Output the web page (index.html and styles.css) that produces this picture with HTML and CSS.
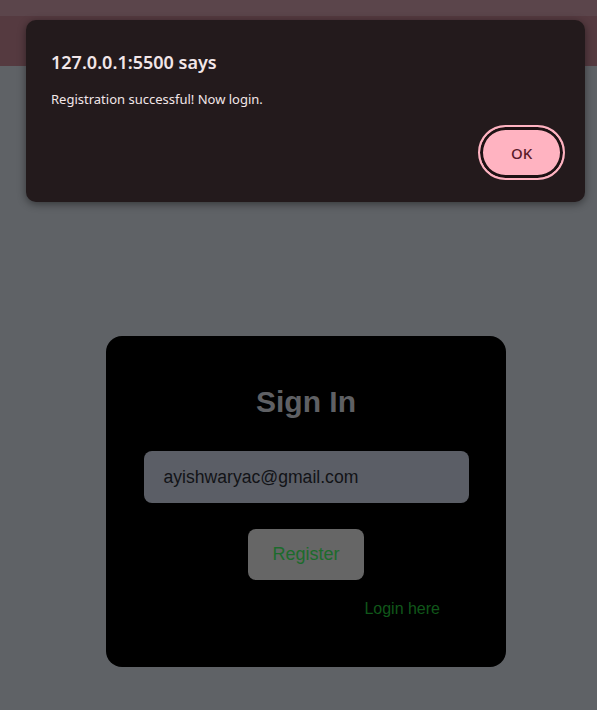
FILE: index.html
```html
<!DOCTYPE html>
<html>
<head>
<meta charset="utf-8">
<link rel="stylesheet" href="styles.css">
</head>
<body>
<div class="topstrip"></div>
<div class="band"></div>
<main class="stage">
  <div class="card">
    <h2 class="title">Sign In</h2>
    <div class="field">ayishwaryac@gmail.com</div>
    <button class="register">Register</button>
    <a class="login">Login here</a>
  </div>
</main>
<div class="dialog">
  <div class="dlg-title">127.0.0.1:5500 says</div>
  <div class="dlg-msg">Registration successful! Now login.</div>
  <div class="dlg-actions"><button class="ok">OK</button></div>
</div>
</body>
</html>
```
FILE: styles.css
```css
html, body { margin: 0; padding: 0; }
body {
  background: #5f6266;
  width: 597px;
  height: 710px;
  overflow: hidden;
  font-family: "Liberation Sans", Arial, sans-serif;
  position: relative;
}
.topstrip { height: 16px; background: #5b454b; }
.band { height: 50px; background: #553a40; }
.stage {
  display: flex;
  justify-content: center;
  padding-left: 15px;
  padding-top: 270px;
}
.card {
  width: 400px;
  height: 331px;
  box-sizing: border-box;
  background: #000;
  border-radius: 16px;
  display: flex;
  flex-direction: column;
  align-items: center;
  padding-top: 48px;
}
.title {
  margin: 0;
  font-size: 30px;
  font-weight: bold;
  color: #5f6064;
  line-height: 36px;
}
.field {
  margin-top: 31px;
  width: 325px;
  height: 52px;
  box-sizing: border-box;
  background: #5b5e66;
  border-radius: 8px;
  padding-left: 20px;
  display: flex;
  align-items: center;
  font-size: 17.6px;
  color: #121317;
}
.register {
  margin-top: 26px;
  width: 116px;
  height: 51px;
  border: none;
  border-radius: 8px;
  background: #666666;
  color: #1c6b2c;
  font-family: "Liberation Sans", Arial, sans-serif;
  font-size: 18px;
}
.login {
  align-self: flex-end;
  margin-right: 66px;
  margin-top: 20px;
  font-size: 16px;
  color: #10571a;
}
.dialog {
  position: absolute;
  left: 26px;
  top: 20px;
  width: 559px;
  height: 182px;
  box-sizing: border-box;
  background: #231a1c;
  border-radius: 10px;
  box-shadow: 0 2px 8px rgba(0,0,0,0.45);
  padding: 30px 20px 0 25px;
  font-family: "Noto Sans", "Open Sans", sans-serif;
  color: #f2e6e8;
}
.dlg-title {
  font-size: 18px;
  font-weight: 600;
  line-height: 24px;
}
.dlg-msg {
  margin-top: 15px;
  font-size: 13px;
  line-height: 20px;
}
.dlg-actions {
  display: flex;
  justify-content: flex-end;
  margin-top: 16px;
}
.ok {
  width: 87px;
  height: 55px;
  box-sizing: border-box;
  border-radius: 28px;
  border: 2px solid #ffb3c1;
  background: #ffb3c1;
  box-shadow: inset 0 0 0 3px #1e1214;
  color: #5a1a2a;
  font-family: "Noto Sans", "Open Sans", sans-serif;
  font-size: 15px;
  font-weight: 500;
}
```
